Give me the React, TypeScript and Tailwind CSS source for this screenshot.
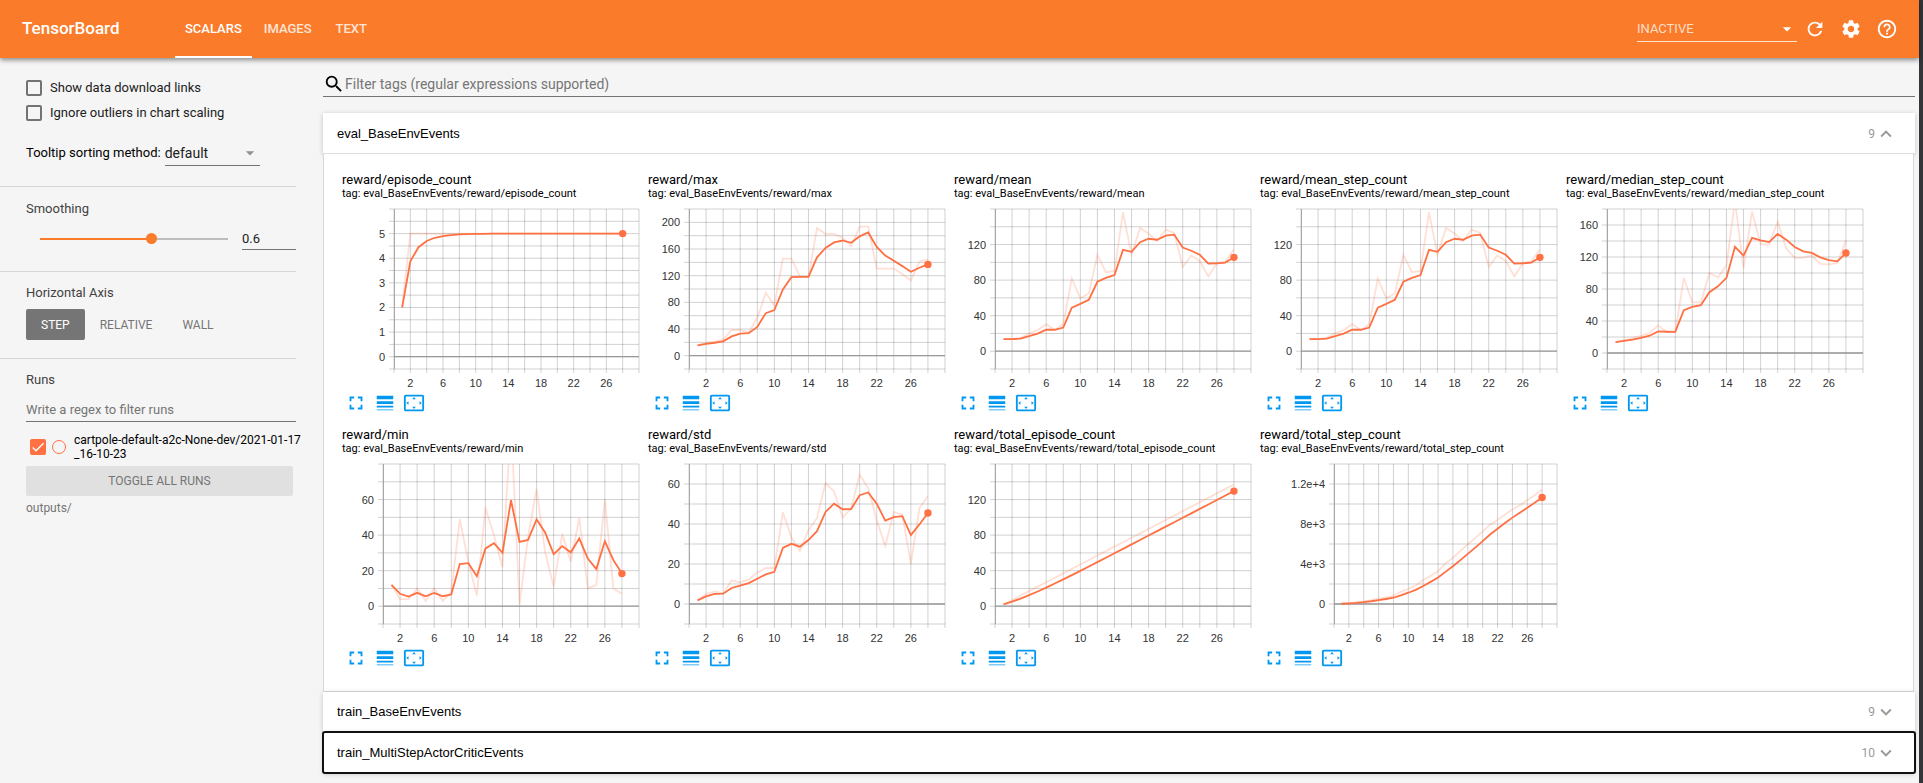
import React, { useState } from 'react';
import {
  MdArrowDropDown,
  MdCheck,
  MdExpandLess,
  MdExpandMore,
  MdFullscreen,
  MdHelpOutline,
  MdLineWeight,
  MdRefresh,
  MdSearch,
  MdSettings,
  MdSettingsOverscan,
} from 'react-icons/md';

type ChartSpec = {
  name: string;
  values: number[];
  min: number;
  max: number;
  gridStep: number;
  labelStep: number;
  axisLeft?: number;
  format?: (v: number) => string;
};

const MAX = [
  15.5, 19, 21, 24, 38.5, 38.5, 35, 56.5, 94.5, 75, 145.5, 145.5, 119, 118, 191.5, 182.5, 182.5, 177, 164, 193.5,
  193.5, 130.5, 130.5, 130.5, 122.5, 113, 141, 144.5,
];
const MEAN = [
  13.5, 13.5, 15, 20, 23.6, 30.4, 24, 30.4, 81.7, 59.6, 65, 108.4, 88.9, 90.4, 156.4, 108.7, 138.7, 132.4, 123.7,
  136.9, 133, 94.9, 107.6, 101.6, 84, 99, 101.2, 114.4,
];
const MEDIAN = [
  13.5, 16, 18.5, 21.5, 25, 34.5, 26, 26, 93.8, 63.3, 63.3, 100, 94.6, 109.6, 191, 105.4, 177, 135.8, 135.8, 164,
  131, 118.8, 118.8, 122, 111.3, 110.8, 112.5, 140.4,
];
const MIN = [
  12, 4, 4, 10, 3, 10, 3, 8, 49, 25, 6, 55.5, 40, 22, 104, 1, 39, 66, 30.5, 11, 40.7, 25, 49.7, 10, 12, 60, 10, 7,
];
const STD = [
  1.8, 5, 6.3, 5.3, 11.7, 10.8, 12.2, 15.8, 18, 18, 45.8, 33.2, 26.5, 37, 43, 60.5, 56.3, 43.2, 47.7, 64.7, 57.8,
  41.8, 29, 46, 44.7, 20.2, 47.8, 54,
];
const EPISODES = MEAN.map((_, i) => (i === 0 ? 2 : 5));
const TOTAL_EPISODES = EPISODES.map((_, i) => EPISODES.slice(0, i + 1).reduce((a, b) => a + b, 0));
const TOTAL_STEPS = MEAN.map((_, i) => MEAN.slice(0, i + 1).reduce((a, m, j) => a + m * EPISODES[j], 0));

const exponent = (v: number) => (v === 0 ? '0' : v >= 10000 ? `${v / 10000}e+4` : `${v / 1000}e+3`);

const CHARTS: ChartSpec[] = [
  { name: 'episode_count', values: EPISODES, min: -0.5, max: 6, gridStep: 0.5, labelStep: 1, axisLeft: 52 },
  { name: 'max', values: MAX, min: -20, max: 220, gridStep: 20, labelStep: 40 },
  { name: 'mean', values: MEAN, min: -20, max: 160, gridStep: 20, labelStep: 40 },
  { name: 'mean_step_count', values: MEAN, min: -20, max: 160, gridStep: 20, labelStep: 40 },
  { name: 'median_step_count', values: MEDIAN, min: -20, max: 180, gridStep: 20, labelStep: 40 },
  { name: 'min', values: MIN, min: -10, max: 80, gridStep: 10, labelStep: 20 },
  { name: 'std', values: STD, min: -10, max: 70, gridStep: 10, labelStep: 20 },
  { name: 'total_episode_count', values: TOTAL_EPISODES, min: -20, max: 160, gridStep: 20, labelStep: 40 },
  {
    name: 'total_step_count',
    values: TOTAL_STEPS,
    min: -2000,
    max: 14000,
    gridStep: 2000,
    labelStep: 4000,
    axisLeft: 74,
    format: exponent,
  },
];

// Exponential moving average with bias correction.
function smooth(values: number[], weight: number): number[] {
  let last = 0;
  return values.map((v, i) => {
    last = last * weight + (1 - weight) * v;
    return last / (1 - Math.pow(weight, i + 1));
  });
}

function range(from: number, to: number, step: number): number[] {
  const out: number[] = [];
  for (let k = Math.round(from / step); k * step <= to + step / 100; k++) out.push(k * step);
  return out;
}

const TOP = 5;
const HEIGHT = 160;
const RIGHT = 297;
const X_LABELS = [2, 6, 10, 14, 18, 22, 26];

function Chart({ spec, smoothing }: { spec: ChartSpec; smoothing: number }) {
  const { name, values, min, max, gridStep, labelStep, axisLeft = 41, format = String } = spec;
  const x = (v: number) => axisLeft + (v / 30) * (RIGHT - axisLeft);
  const y = (v: number) => TOP + ((max - v) / (max - min)) * HEIGHT;
  const line = (vs: number[]) => vs.map((v, i) => `${x(i + 1).toFixed(2)},${y(v).toFixed(2)}`).join(' ');
  const smoothed = smooth(values, smoothing);
  const bottom = TOP + HEIGHT;
  const rows = range(min, max, gridStep);
  const last = values.length;

  return (
    <svg width="300" height="186" role="img" aria-label={`reward/${name}`} className="block">
      <clipPath id={`clip-${name}`}>
        <rect x={axisLeft} y={TOP} width={RIGHT - axisLeft + 5} height={HEIGHT} />
      </clipPath>
      <g stroke="#000" strokeOpacity="0.18">
        {range(0, 30, 2).map((v) => (
          <line key={v} x1={x(v)} x2={x(v)} y1={TOP} y2={bottom + 4} />
        ))}
        {rows.map((v) => (
          <line key={v} x1={axisLeft - 5} x2={RIGHT} y1={y(v)} y2={y(v)} />
        ))}
      </g>
      <line x1={axisLeft + 0.5} x2={axisLeft + 0.5} y1={TOP} y2={bottom} stroke="#a8a8a8" />
      <line x1={axisLeft} x2={RIGHT} y1={y(0)} y2={y(0)} stroke="#999" strokeWidth="1.3" />
      <g clipPath={`url(#clip-${name})`} fill="none" stroke="#ff7043" strokeWidth="1.8">
        <polyline points={line(values)} strokeOpacity="0.22" />
        <polyline points={line(smoothed)} />
      </g>
      <circle cx={x(last)} cy={y(smoothed[last - 1])} r="3.7" fill="#ff7043" />
      <g fill="#333" className="font-['Liberation_Sans',sans-serif] text-[11px]">
        {rows
          .filter((v) => v >= 0 && v % labelStep === 0 && y(v) > TOP + 10)
          .map((v) => (
            <text key={v} x={axisLeft - 9} y={y(v) + 4} textAnchor="end">
              {format(v)}
            </text>
          ))}
        {X_LABELS.map((v) => (
          <text key={v} x={x(v)} y={bottom + 18} textAnchor="middle">
            {v}
          </text>
        ))}
      </g>
    </svg>
  );
}

function ChartCard({ spec, smoothing }: { spec: ChartSpec; smoothing: number }) {
  const actions = [
    { label: 'Toggle full size', Icon: MdFullscreen },
    { label: 'Toggle log scale', Icon: MdLineWeight },
    { label: 'Fit domain to data', Icon: MdSettingsOverscan },
  ];
  return (
    <article className="h-[255px] w-[306px]">
      <h3 className="text-[13px] leading-4 whitespace-nowrap">reward/{spec.name}</h3>
      <p className="mb-1 text-[11px] leading-3 whitespace-nowrap">tag: eval_BaseEnvEvents/reward/{spec.name}</p>
      <Chart spec={spec} smoothing={smoothing} />
      <div className="mt-[2px] ml-[3px] flex gap-[7px] text-[#0398f0]">
        {actions.map(({ label, Icon }) => (
          <button key={label} type="button" aria-label={label}>
            <Icon size={22} />
          </button>
        ))}
      </div>
    </article>
  );
}

function PaneHeader({
  title,
  count,
  open = false,
  focused = false,
}: {
  title: string;
  count: number;
  open?: boolean;
  focused?: boolean;
}) {
  const Chevron = open ? MdExpandLess : MdExpandMore;
  return (
    <button
      type="button"
      aria-expanded={open}
      className={
        'flex w-full items-center justify-between bg-white pr-[18px] pl-[14px] shadow-[0_1px_5px_rgba(0,0,0,0.2)] ' +
        (focused
          ? 'relative h-[41px] rounded-[2px] outline-2 -outline-offset-1 outline-[#101010]'
          : open
            ? 'h-[41px] border-b border-[#ddd] pt-px'
            : 'h-10')
      }
    >
      <span className="font-['Liberation_Sans',sans-serif] text-[13px]">{title}</span>
      <span className="flex items-center text-xs text-[#999]">
        {count}
        <Chevron size={22} />
      </span>
    </button>
  );
}

function Sidebar({ smoothing, onSmoothing }: { smoothing: number; onSmoothing: (v: number) => void }) {
  const box = 'size-4 shrink-0 appearance-none rounded-[2px] border-2 border-[#737373]';
  const heading = 'text-[13px] leading-5 text-[#424242]';
  return (
    <aside className="w-[323px] shrink-0 text-[13px] text-[#212121]">
      <section className="mr-[27px] border-b border-[#d5d5d5] pt-5 pb-5 pl-[26px]">
        <label className="flex h-5 items-center gap-2">
          <input type="checkbox" className={box} />
          Show data download links
        </label>
        <label className="mt-[5px] flex h-5 items-center gap-2">
          <input type="checkbox" className={box} />
          Ignore outliers in chart scaling
        </label>
        <div className="mt-[17px] flex items-center gap-1">
          <label htmlFor="sorting" className="text-black">
            Tooltip sorting method:
          </label>
          <span className="relative flex w-[95px] items-center">
            <select
              id="sorting"
              className="h-[26px] w-full appearance-none border-b border-[#737373] bg-transparent text-sm"
            >
              <option>default</option>
            </select>
            <MdArrowDropDown size={20} className="pointer-events-none absolute right-0 text-[#909090]" />
          </span>
        </div>
      </section>

      <section className="mr-[27px] border-b border-[#d5d5d5] pt-3 pb-[21px] pl-[26px]">
        <label htmlFor="smoothing" className={heading + ' block'}>
          Smoothing
        </label>
        <div className="mt-2 flex items-center pl-[14px]">
          <input
            id="smoothing"
            type="range"
            min="0"
            max="1"
            step="0.001"
            value={smoothing}
            onChange={(e) => onSmoothing(Number(e.target.value))}
            className="h-[2px] w-[188px] appearance-none bg-[linear-gradient(to_right,#fa7b29_60%,#bdbdbd_60%)] [&::-webkit-slider-thumb]:size-[11px] [&::-webkit-slider-thumb]:appearance-none [&::-webkit-slider-thumb]:rounded-full [&::-webkit-slider-thumb]:bg-[#fa7b29]"
          />
          <input
            aria-label="Smoothing value"
            value={smoothing}
            onChange={(e) => onSmoothing(Number(e.target.value) || 0)}
            className="ml-[14px] h-[23px] min-w-0 flex-1 border-b border-[#737373] bg-transparent"
          />
        </div>
      </section>

      <section className="mr-[27px] border-b border-[#d5d5d5] pt-[11px] pb-[18px] pl-[26px]">
        <h2 className={heading}>Horizontal Axis</h2>
        <div className="mt-[6px] flex text-xs text-[#757575]">
          <button type="button" className="h-[31px] rounded-[2px] bg-[#757575] px-[15px] text-white">
            STEP
          </button>
          <button type="button" className="h-[31px] px-[15px]">
            RELATIVE
          </button>
          <button type="button" className="h-[31px] px-[15px]">
            WALL
          </button>
        </div>
      </section>

      <section className="mr-[27px] pt-[11px] pl-[26px]">
        <h2 className={heading}>Runs</h2>
        <input
          aria-label="Filter runs"
          placeholder="Write a regex to filter runs"
          className="mt-2 h-6 w-full border-b border-[#737373] bg-transparent placeholder:text-[#757575]"
        />
        <div className="mt-[11px] flex items-center pl-1">
          <span className="grid shrink-0">
            <input
              id="run"
              type="checkbox"
              defaultChecked
              className="col-start-1 row-start-1 size-4 appearance-none rounded-[2px] bg-[#ff7043]"
            />
            <MdCheck size={16} className="pointer-events-none col-start-1 row-start-1 text-white" />
          </span>
          <button
            type="button"
            aria-label="Show only this run"
            className="ml-[6px] size-[14px] shrink-0 rounded-full border border-[#ff7043]"
          />
          <label htmlFor="run" className="ml-2 text-xs leading-[14px] whitespace-nowrap text-black">
            cartpole-default-a2c-None-dev/2021-01-17
            <br />
            _16-10-23
          </label>
        </div>
        <button type="button" className="mt-[5px] h-[30px] w-[267px] rounded-[2px] bg-[#e0e0e0] text-xs text-[#757575]">
          TOGGLE ALL RUNS
        </button>
        <p className="mt-1 text-xs leading-4 text-[#757575]">outputs/</p>
      </section>
    </aside>
  );
}

function Header() {
  return (
    <header className="relative flex h-[58px] items-center bg-[#fa7b29] pr-[21px] pl-[22px] text-white shadow-[0_2px_5px_rgba(0,0,0,0.45)]">
      <h1 className="w-[153px] text-[17px] font-medium">TensorBoard</h1>
      <nav className="flex h-full flex-1 text-[13px] font-medium">
        <a href="#scalars" className="flex items-center border-b-2 border-white px-[10px] pt-[2px]">
          SCALARS
        </a>
        <a href="#images" className="flex items-center px-3 text-white/80">
          IMAGES
        </a>
        <a href="#text" className="flex items-center px-3 text-white/80">
          TEXT
        </a>
      </nav>
      <span className="relative flex w-40 items-center">
        <select
          aria-label="Inactive plugins"
          className="h-[26px] w-full appearance-none border-b border-white/80 bg-transparent text-[13px] text-white/75"
        >
          <option>INACTIVE</option>
        </select>
        <MdArrowDropDown size={20} className="pointer-events-none absolute right-0" />
      </span>
      <div className="ml-[7px] flex gap-[14px]">
        <button type="button" aria-label="Reload">
          <MdRefresh size={22} />
        </button>
        <button type="button" aria-label="Settings">
          <MdSettings size={22} />
        </button>
        <a href="#help" aria-label="Help">
          <MdHelpOutline size={22} />
        </a>
      </div>
    </header>
  );
}

export default function App() {
  const [smoothing, setSmoothing] = useState(0.6);
  return (
    <div className="flex min-h-screen bg-[#f5f5f5] font-['Roboto',sans-serif] text-black">
      <div className="flex min-w-0 flex-1 flex-col">
        <Header />
        <div className="flex flex-1">
          <Sidebar smoothing={smoothing} onSmoothing={setSmoothing} />
          <main className="min-w-0 flex-1 pt-[13px] pr-1">
            <label className="flex h-[26px] items-center border-b border-[#737373]">
              <MdSearch size={22} className="shrink-0" />
              <input
                aria-label="Filter tags"
                placeholder="Filter tags (regular expressions supported)"
                className="min-w-0 flex-1 bg-transparent text-sm placeholder:text-[#757575]"
              />
            </label>
            <div className="mt-4">
              <PaneHeader title="eval_BaseEnvEvents" count={9} open />
              <div className="mr-px flex flex-wrap border-x border-b border-[#d8d8d8] bg-white pt-[18px] pb-[9px] pl-[18px]">
                {CHARTS.map((spec) => (
                  <ChartCard key={spec.name} spec={spec} smoothing={smoothing} />
                ))}
              </div>
              <PaneHeader title="train_BaseEnvEvents" count={9} />
              <PaneHeader title="train_MultiStepActorCriticEvents" count={10} focused />
            </div>
          </main>
        </div>
      </div>
      <div className="w-1 bg-[#343539]" />
    </div>
  );
}
